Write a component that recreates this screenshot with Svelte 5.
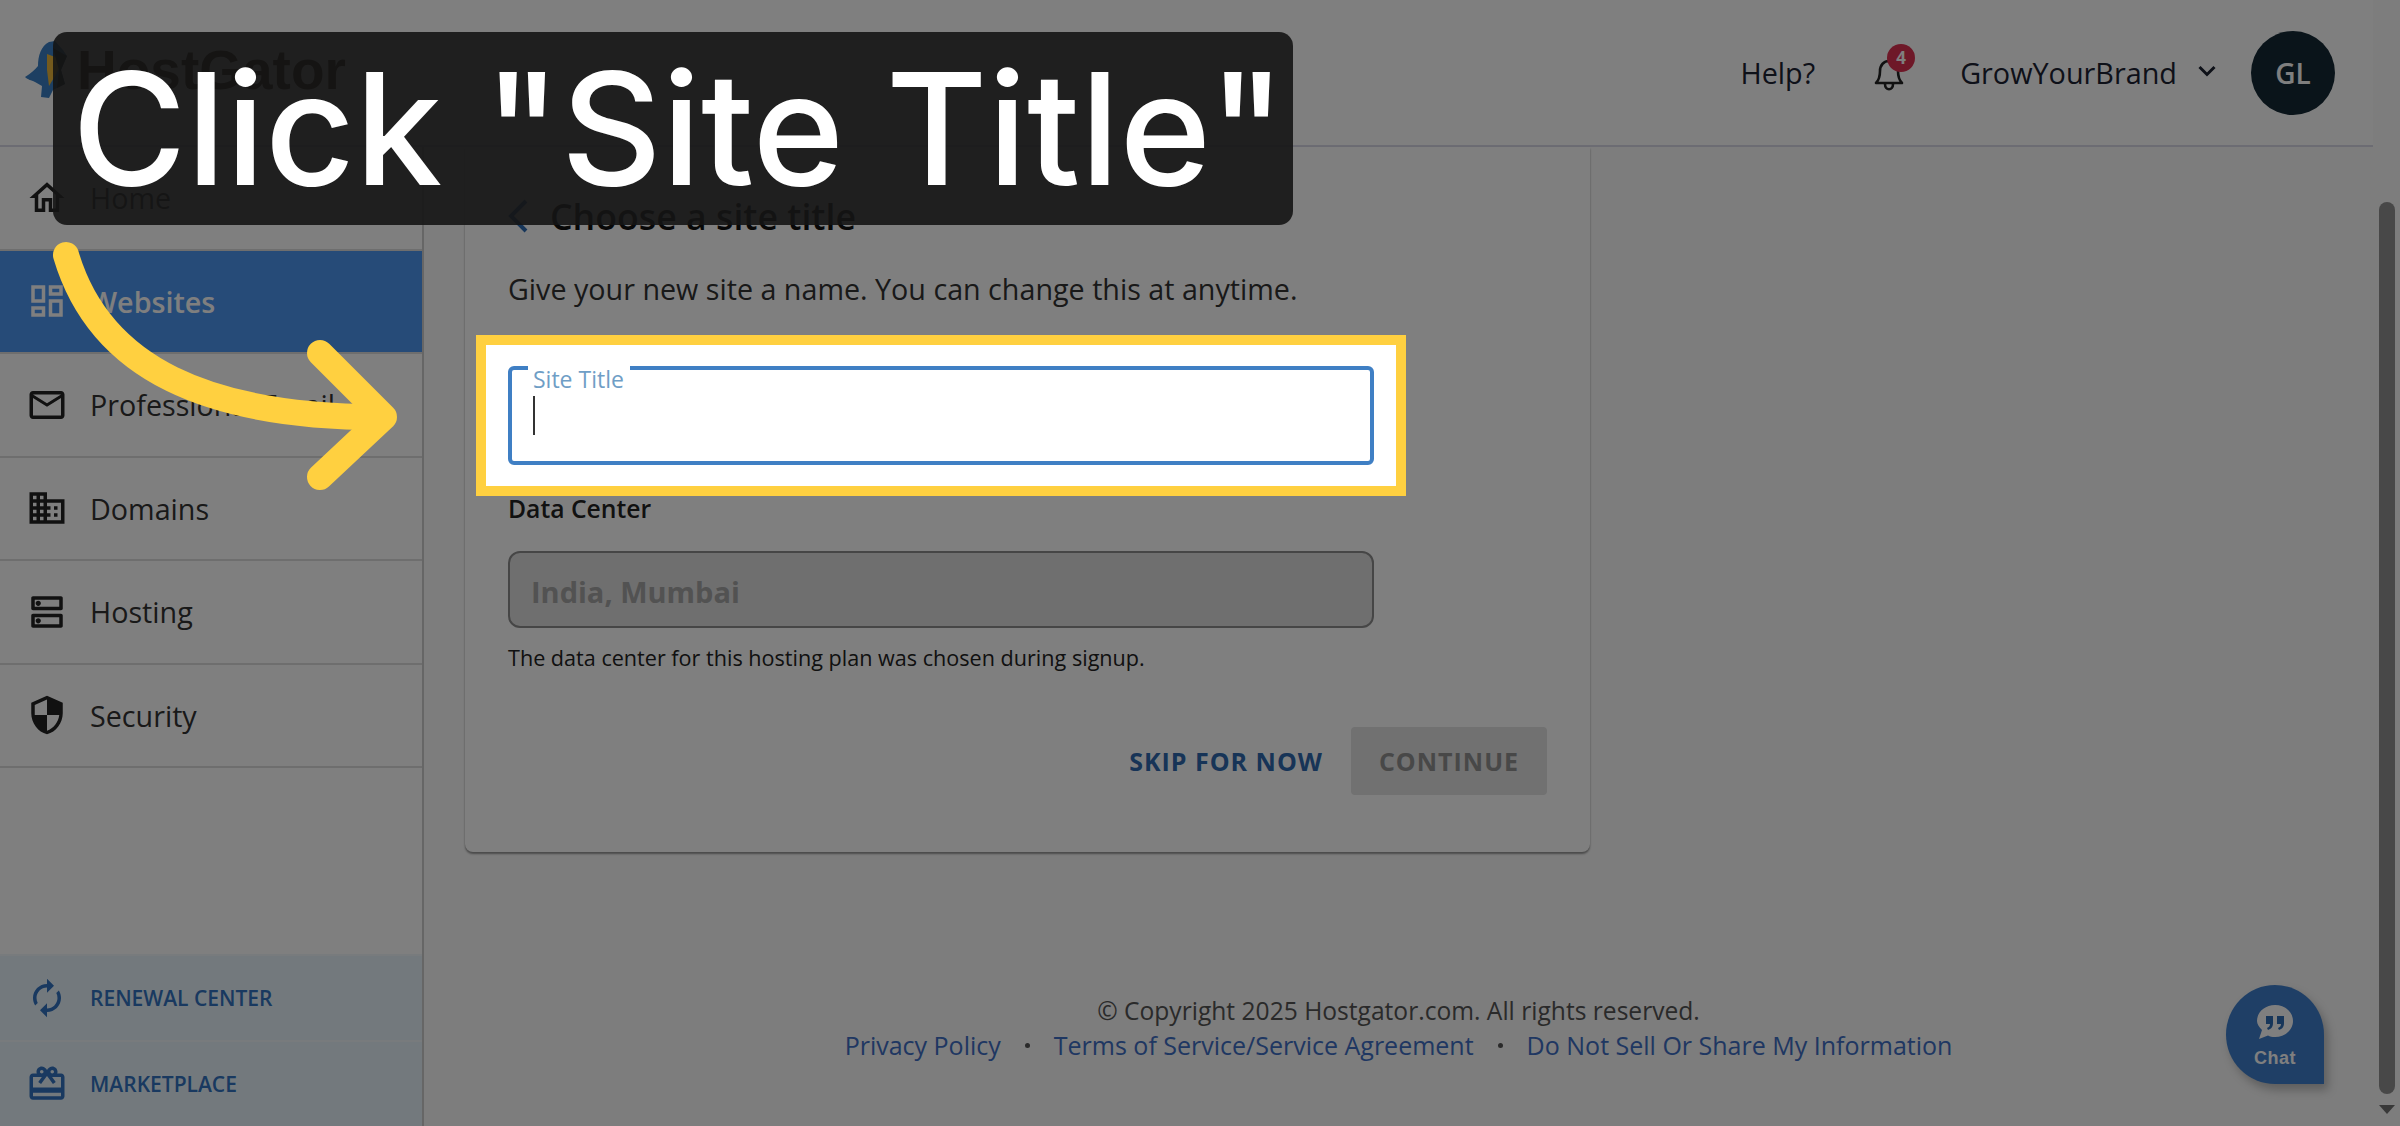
<script>
	const navItems = [
		{ label: 'Home', icon: 'M12 5.69l5 4.5V18h-2v-6H9v6H7v-7.81l5-4.5M12 3L2 12h3v8h6v-6h2v6h6v-8h3L12 3z' },
		{ label: 'Websites', active: true, icon: 'M19 5v2h-4V5h4M9 5v6H5V5h4m10 8v6h-4v-6h4M9 17v2H5v-2h4M21 3h-8v6h8V3zM11 3H3v10h8V3zm10 8h-8v10h8V11zm-10 4H3v6h8v-6z' },
		{ label: 'Professional Email', icon: 'M22 6c0-1.1-.9-2-2-2H4c-1.1 0-2 .9-2 2v12c0 1.1.9 2 2 2h16c1.1 0 2-.9 2-2V6zm-2 0l-8 5-8-5h16zm0 12H4V8l8 5 8-5v10z' },
		{ label: 'Domains', icon: 'M12 7V3H2v18h20V7H12zM6 19H4v-2h2v2zm0-4H4v-2h2v2zm0-4H4V9h2v2zm0-4H4V5h2v2zm4 12H8v-2h2v2zm0-4H8v-2h2v2zm0-4H8V9h2v2zm0-4H8V5h2v2zm10 12h-8v-2h2v-2h-2v-2h2v-2h-2V9h8v10zm-2-8h-2v2h2v-2zm0 4h-2v2h2v-2z' },
		{ label: 'Hosting', icon: 'M19 15v4H5v-4h14m1-2H4c-.55 0-1 .45-1 1v6c0 .55.45 1 1 1h16c.55 0 1-.45 1-1v-6c0-.55-.45-1-1-1zM7 18.5c-.82 0-1.5-.67-1.5-1.5s.68-1.5 1.5-1.5 1.5.67 1.5 1.5-.67 1.5-1.5 1.5zM19 5v4H5V5h14m1-2H4c-.55 0-1 .45-1 1v6c0 .55.45 1 1 1h16c.55 0 1-.45 1-1V4c0-.55-.45-1-1-1zM7 8.5c-.82 0-1.5-.67-1.5-1.5S6.18 5.5 7 5.5s1.5.68 1.5 1.5S7.83 8.5 7 8.5z' },
		{ label: 'Security', icon: 'M12 1L3 5v6c0 5.55 3.84 10.74 9 12 5.16-1.26 9-6.45 9-12V5l-9-4zm0 10.99h7c-.53 4.12-3.28 7.79-7 8.94V12H5V6.3l7-3.11v8.8z' }
	]
	const promoItems = [
		{ label: 'RENEWAL CENTER', icon: 'M12 6v3l4-4-4-4v3c-4.42 0-8 3.58-8 8 0 1.57.46 3.03 1.24 4.26L6.7 14.8c-.45-.83-.7-1.79-.7-2.8 0-3.31 2.69-6 6-6zm6.76 1.74L17.3 9.2c.44.84.7 1.79.7 2.8 0 3.31-2.69 6-6 6v-3l-4 4 4 4v-3c4.42 0 8-3.58 8-8 0-1.57-.46-3.03-1.24-4.26z' },
		{ label: 'MARKETPLACE', icon: 'M20 6h-2.18c.11-.31.18-.65.18-1 0-1.66-1.34-3-3-3-1.05 0-1.96.54-2.5 1.35l-.5.67-.5-.68C10.96 2.54 10.05 2 9 2 7.34 2 6 3.34 6 5c0 .35.07.69.18 1H4c-1.11 0-1.99.89-1.99 2L2 19c0 1.11.89 2 2 2h16c1.11 0 2-.89 2-2V8c0-1.11-.89-2-2-2zm-5-2c.55 0 1 .45 1 1s-.45 1-1 1-1-.45-1-1 .45-1 1-1zM9 4c.55 0 1 .45 1 1s-.45 1-1 1-1-.45-1-1 .45-1 1-1zm11 15H4v-2h16v2zm0-5H4V8h5.08L7 10.83 8.62 12 11 8.76l1-1.36 1 1.36L15.38 12 17 10.83 14.92 8H20v6z' }
	]
</script>

<div class="screen">
	<div class="window">
		<header>
			<div class="logo">
				<svg class="gator" viewBox="0 0 42 60" aria-hidden="true">
					<path d="M0 37C6 33 10 30 13 26C13 16 16 6 24 2L30 1L38 10L42 16L36 30L40 44L28 50L24 58L16 57L17 46L10 42C6 40 3 40 0 37z" fill="#3a7fc4" />
					<path d="M22 14L38 20L30 36L24 46L22 30z" fill="#e8b53a" />
					<path d="M28 8L42 16L36 30L40 44L32 48L34 30z" fill="#1d2a3a" />
				</svg>
				<span class="brand">HostGator</span>
			</div>
			<div class="tools">
				<span class="help">Help?</span>
				<span class="bell">
					<svg viewBox="0 0 30 36" width="30" height="36" fill="none" stroke="#222" stroke-width="2.6" stroke-linejoin="round" aria-hidden="true">
						<path d="M2 28c3-3 4-6 4-12 0-6 4-10 9-10s9 4 9 10c0 6 1 9 4 12z" />
						<path d="M11 29c0 7 8 7 8 0" />
					</svg>
					<span class="badge">4</span>
				</span>
				<span class="account">GrowYourBrand</span>
				<svg class="caret" viewBox="0 0 18 12" width="18" height="12" fill="none" stroke="#1c2230" stroke-width="3" aria-hidden="true"><path d="M1.5 2l7.500 7.500L16.500 2" /></svg>
				<span class="avatar">GL</span>
			</div>
		</header>

		<div class="layout">
			<aside>
				<nav>
					{#each navItems as item}
						<div class="nav-item" class:active={item.active}>
							<svg viewBox="0 0 24 24" width="42" height="42" aria-hidden="true"><path d={item.icon} /></svg>
							<span>{item.label}</span>
						</div>
					{/each}
				</nav>
				<div class="promos">
					{#each promoItems as item}
						<div class="promo">
							<svg viewBox="0 0 24 24" width="42" height="42" aria-hidden="true"><path d={item.icon} /></svg>
							<span>{item.label}</span>
						</div>
					{/each}
				</div>
			</aside>

			<main>
				<section class="card">
					<div class="title-row">
						<svg viewBox="0 0 20 34" width="20" height="34" fill="none" stroke="#2f6db5" stroke-width="4" aria-hidden="true"><path d="M18 2L3 17l15 15" /></svg>
						<h1>Choose a site title</h1>
					</div>
					<p class="lead">Give your new site a name. You can change this at anytime.</p>

					<div class="spot">
						<div class="field">
							<span class="legend">Site Title</span>
							<span class="cursor"></span>
						</div>
					</div>

					<div class="dc-label">Data Center</div>
					<div class="dc-field">India, Mumbai</div>
					<p class="hint">The data center for this hosting plan was chosen during signup.</p>

					<div class="actions">
						<span class="skip">SKIP FOR NOW</span>
						<span class="continue">CONTINUE</span>
					</div>
				</section>

				<footer>
					<div class="copy">© Copyright 2025 Hostgator.com. All rights reserved.</div>
					<div class="links">
						<span>Privacy Policy</span>
						<i></i>
						<span>Terms of Service/Service Agreement</span>
						<i></i>
						<span>Do Not Sell Or Share My Information</span>
					</div>
				</footer>

				<div class="chat">
					<svg viewBox="0 0 40 38" width="40" height="38" aria-hidden="true">
						<path d="M20 1c10 0 18 7 18 16s-8 16-18 16c-3 0-5-.5-7-1.500L4 35l3-9c-3-3-5-6-5-9C2 8 10 1 20 1z" fill="#fff" />
						<path d="M11 12h7v7c0 4-2 6-5 7l-1-2c2-1 3-2 3-4h-4zM22 12h7v7c0 4-2 6-5 7l-1-2c2-1 3-2 3-4h-4z" fill="#2f6db5" />
					</svg>
					<span>Chat</span>
				</div>
			</main>
		</div>
	</div>

	<div class="scrollbar">
		<div class="thumb"></div>
		<div class="arrow"></div>
	</div>

	<div class="overlay"></div>

	<div class="callout">Click "Site Title"</div>
	<svg class="pointer" viewBox="0 0 420 500" width="420" height="500" fill="none" stroke="#ffd040" stroke-width="26" stroke-linecap="round" stroke-linejoin="round" aria-hidden="true">
		<path d="M66 255C100 370 210 417 380 417" />
		<path d="M320 353L384 417L320 477" />
	</svg>
</div>

<style>
	:global(body) {
		margin: 0;
	}
	.screen {
		position: relative;
		width: 2400px;
		height: 1126px;
		overflow: hidden;
		display: flex;
		background: #fff;
		font-family: "Open Sans", "Liberation Sans", sans-serif;
		color: #222;
	}
	.window {
		flex: 1;
		min-width: 0;
		display: flex;
		flex-direction: column;
	}
	header {
		height: 147px;
		flex: none;
		box-sizing: border-box;
		border-bottom: 2px solid #d8d8e6;
		display: flex;
		align-items: center;
		justify-content: space-between;
		padding: 0 38px 0 25px;
	}
	.logo {
		display: flex;
		align-items: center;
		gap: 10px;
		margin-top: -6px;
	}
	.gator {
		width: 42px;
		height: 60px;
	}
	.brand {
		font-family: "Liberation Sans", sans-serif;
		font-size: 55px;
		font-weight: 700;
		color: #2c1c08;
	}
	.tools {
		display: flex;
		align-items: center;
		font-size: 28.800px;
		color: #1c2333;
	}
	.bell {
		position: relative;
		display: flex;
		margin: 0 56px 0 59px;
	}
	.badge {
		position: absolute;
		left: 13px;
		top: -11px;
		width: 28px;
		height: 28px;
		border-radius: 50%;
		background: #dc3050;
		color: #fff;
		font-size: 17px;
		font-weight: 700;
		line-height: 28px;
		text-align: center;
	}
	.caret {
		margin: -4px 35px 0 21px;
	}
	.avatar {
		width: 84px;
		height: 84px;
		border-radius: 50%;
		background: #142834;
		color: #fff;
		font-size: 28px;
		font-weight: 600;
		display: flex;
		align-items: center;
		justify-content: center;
	}
	.layout {
		flex: 1;
		min-height: 0;
		display: flex;
	}
	aside {
		width: 424px;
		flex: none;
		box-sizing: border-box;
		border-right: 2px solid #ccc;
		display: flex;
		flex-direction: column;
		justify-content: space-between;
	}
	.nav-item {
		height: 103.500px;
		box-sizing: border-box;
		border-bottom: 2px solid #ddd;
		padding-left: 26px;
		display: flex;
		align-items: center;
		gap: 22px;
		font-size: 28.700px;
		color: #333;
	}
	.nav-item svg {
		fill: #222;
		flex: none;
	}
	.nav-item.active {
		background: #4c96f0;
		color: #fff;
		font-weight: 600;
	}
	.nav-item.active svg {
		fill: #fff;
	}
	.promos {
		background: #e6f2fa;
	}
	.promo {
		height: 84px;
		padding-left: 26px;
		display: flex;
		align-items: center;
		gap: 22px;
		font-size: 21px;
		font-weight: 600;
		color: #3272c0;
		border-top: 2px solid #f0f6fb;
	}
	.promo svg {
		fill: #3272c0;
		flex: none;
	}
	main {
		position: relative;
		flex: 1;
		min-width: 0;
		background: #fafafa;
		display: flex;
		flex-direction: column;
	}
	.card {
		width: 1125px;
		height: 705px;
		margin-left: 41px;
		box-sizing: border-box;
		padding: 44px 43px 0;
		background: #fff;
		border-radius: 0 0 8px 8px;
		box-shadow: 0 2px 2px rgba(0, 0, 0, 0.4), 0 0 1px rgba(0, 0, 0, 0.08);
	}
	.title-row {
		display: flex;
		align-items: center;
		gap: 22px;
		height: 50px;
	}
	h1 {
		margin: 0;
		font-size: 35.700px;
		font-weight: 600;
		color: #111;
	}
	.lead {
		margin: 29px 0 0;
		font-size: 28.700px;
		line-height: 38px;
		color: #333;
	}
	.spot {
		position: relative;
		z-index: 5;
		width: 930px;
		box-sizing: border-box;
		margin: 27px 0 0 -32px;
		padding: 21px 22px 21px 22px;
		background: #fff;
		border: 10px solid #ffd040;
	}
	.field {
		position: relative;
		height: 99px;
		box-sizing: border-box;
		border: 4px solid #3f7fc4;
		border-radius: 6px;
	}
	.legend {
		position: absolute;
		left: 16px;
		top: -6px;
		padding: 0 6px 0 5px;
		background: #fff;
		font-size: 23px;
		line-height: 30px;
		color: #6f9ec6;
	}
	.cursor {
		position: absolute;
		left: 21px;
		top: 26px;
		width: 2px;
		height: 39px;
		background: #333;
	}
	.dc-label {
		height: 28px;
		font-size: 24.700px;
		line-height: 28px;
		font-weight: 600;
		margin: -1px 0 28px;
		color: #222;
	}
	.dc-field {
		width: 866px;
		height: 77px;
		box-sizing: border-box;
		border: 2px solid #8c8c8c;
		border-radius: 12px;
		background: #dedede;
		padding: 4px 21px 0;
		display: flex;
		align-items: center;
		font-size: 29px;
		font-weight: 700;
		color: #a4a4a4;
	}
	.hint {
		margin: 16px 0 0;
		font-size: 21.600px;
		line-height: 28px;
		color: #222;
	}
	.actions {
		margin-top: 55px;
		display: flex;
		align-items: center;
		justify-content: flex-end;
		gap: 28px;
		font-size: 25px;
		font-weight: 700;
		letter-spacing: 1px;
	}
	.skip {
		color: #2f68ae;
	}
	.continue {
		width: 196px;
		height: 68px;
		border-radius: 4px;
		background: #e2e2e2;
		color: #909090;
		display: flex;
		align-items: center;
		justify-content: center;
	}
	footer {
		margin-top: 141px;
		display: flex;
		flex-direction: column;
		align-items: center;
		font-size: 25px;
		line-height: 35px;
		color: #555;
	}
	.copy {
		font-size: 24.600px;
	}
	.links {
		display: flex;
		align-items: center;
		gap: 24px;
		color: #3f6fc4;
	}
	.links i {
		width: 5px;
		height: 5px;
		border-radius: 50%;
		background: #555;
	}
	.chat {
		position: absolute;
		left: 1802px;
		top: 838px;
		width: 98px;
		height: 99px;
		border-radius: 50% 50% 0 50%;
		background: #3f7fcc;
		box-shadow: 4px 6px 10px rgba(0, 0, 0, 0.25);
		display: flex;
		flex-direction: column;
		align-items: center;
		gap: 6px;
		padding-top: 19px;
		box-sizing: border-box;
		color: #fff;
		font-family: "Liberation Sans", sans-serif;
		font-size: 18px;
		font-weight: 700;
		letter-spacing: 0.5px;
	}
	.scrollbar {
		width: 27px;
		flex: none;
		background: #fafafa;
		display: flex;
		flex-direction: column;
		align-items: center;
		padding-top: 202px;
		box-sizing: border-box;
	}
	.thumb {
		width: 16px;
		height: 892px;
		border-radius: 8px;
		background: #909090;
	}
	.arrow {
		margin-top: 11px;
		border-left: 8px solid transparent;
		border-right: 8px solid transparent;
		border-top: 9px solid #707070;
	}
	.overlay {
		position: absolute;
		inset: 0;
		z-index: 3;
		background: rgba(0, 0, 0, 0.5);
	}
	.callout {
		position: absolute;
		z-index: 6;
		left: 53px;
		top: 32px;
		width: 1240px;
		height: 193px;
		box-sizing: border-box;
		padding-left: 19px;
		border-radius: 14px;
		background: rgba(21, 21, 21, 0.9);
		color: #fff;
		font-family: Inter, sans-serif;
		font-weight: 500;
		font-size: 156px;
		line-height: 193px;
		white-space: nowrap;
	}
	.pointer {
		position: absolute;
		z-index: 7;
		left: 0;
		top: 0;
	}
</style>
